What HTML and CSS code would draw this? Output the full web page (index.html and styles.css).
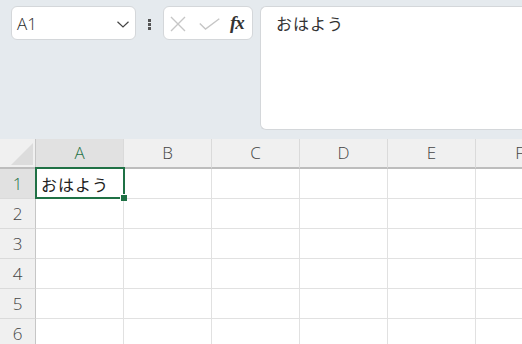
FILE: index.html
```html
<!DOCTYPE html>
<html lang="ja">
<head>
    <meta charset="UTF-8">
    <meta name="viewport" content="width=device-width, initial-scale=1.0">
    <title>Sheet</title>
    <link rel="stylesheet" href="styles.css">
</head>
<body>
    <div class="toolbar">
        <div class="name-box">
            <span class="name-text">A1</span>
            <svg class="chevron" width="12" height="7" viewBox="0 0 12 7">
                <path d="M0.5 0.8 L6 6 L11.5 0.8" fill="none" stroke="#444" stroke-width="1.2"/>
            </svg>
        </div>
        <div class="more">
            <span class="dot"></span>
            <span class="dot"></span>
            <span class="dot"></span>
        </div>
        <div class="fx-box">
            <svg class="icon-x" width="16" height="16" viewBox="0 0 16 16">
                <path d="M1 1 L15 15 M15 1 L1 15" stroke="#c6c6c6" stroke-width="1.4" fill="none"/>
            </svg>
            <svg class="icon-check" width="21" height="12" viewBox="0 0 21 12">
                <path d="M0.8 5.5 L6.5 11 L20.3 0.8" stroke="#c6c6c6" stroke-width="1.4" fill="none"/>
            </svg>
            <span class="fx">fx</span>
        </div>
        <div class="formula-bar">おはよう</div>
    </div>

    <div class="sheet">
        <div class="corner"></div>
        <div class="col-head active">A</div>
        <div class="col-head">B</div>
        <div class="col-head">C</div>
        <div class="col-head">D</div>
        <div class="col-head">E</div>
        <div class="col-head">F</div>

        <div class="row-head active">1</div>
        <div class="cell selected">おはよう</div>
        <div class="cell"></div><div class="cell"></div><div class="cell"></div><div class="cell"></div><div class="cell"></div>

        <div class="row-head">2</div>
        <div class="cell"></div><div class="cell"></div><div class="cell"></div><div class="cell"></div><div class="cell"></div><div class="cell"></div>

        <div class="row-head">3</div>
        <div class="cell"></div><div class="cell"></div><div class="cell"></div><div class="cell"></div><div class="cell"></div><div class="cell"></div>

        <div class="row-head">4</div>
        <div class="cell"></div><div class="cell"></div><div class="cell"></div><div class="cell"></div><div class="cell"></div><div class="cell"></div>

        <div class="row-head">5</div>
        <div class="cell"></div><div class="cell"></div><div class="cell"></div><div class="cell"></div><div class="cell"></div><div class="cell"></div>

        <div class="row-head">6</div>
        <div class="cell"></div><div class="cell"></div><div class="cell"></div><div class="cell"></div><div class="cell"></div><div class="cell"></div>
    </div>
</body>
</html>
```

FILE: styles.css
```css
body {
    margin: 0;
    width: 522px;
    height: 344px;
    overflow: hidden;
    background: #ffffff;
    font-family: 'Open Sans', 'Noto Sans CJK JP', sans-serif;
    color: #333;
}

/* top bar: name box, buttons, formula bar */
.toolbar {
    height: 139px;
    box-sizing: border-box;
    padding: 6px 0 0 11px;
    background: #e5eaee;
    display: flex;
    align-items: flex-start;
}

.name-box, .fx-box, .formula-bar {
    background: #fff;
    border: 1px solid #d4d7da;
    border-radius: 6px;
    box-sizing: border-box;
}

.name-box {
    flex-shrink: 0;
    width: 125px;
    height: 34px;
    display: flex;
    align-items: center;
    justify-content: space-between;
    padding: 0 6px 0 5px;
}

.name-text {
    font-size: 17px;
    font-weight: 300;
    color: #2b2b2b;
}

.chevron {
    margin-top: 2px;
}

.more {
    flex-shrink: 0;
    width: 27px;
    height: 34px;
    display: flex;
    flex-direction: column;
    align-items: center;
    justify-content: center;
    gap: 1px;
    padding-top: 2px;
    box-sizing: border-box;
}

.dot {
    width: 3px;
    height: 3px;
    background: #555;
}

.fx-box {
    flex-shrink: 0;
    width: 90px;
    height: 34px;
    display: flex;
    align-items: center;
    padding-left: 6px;
}

.icon-x {
    margin-top: 2px;
}

.icon-check {
    margin-left: 13px;
    margin-top: 1px;
}

.fx {
    margin-left: 10px;
    font-family: 'Liberation Serif', serif;
    font-style: italic;
    font-weight: bold;
    font-size: 19px;
    color: #333;
    letter-spacing: -1px;
}

.formula-bar {
    margin-left: 7px;
    flex: 1;
    min-width: 0;
    height: 124px;
    border-right: none;
    border-radius: 6px 0 0 6px;
    padding: 4px 0 0 15px;
    font-family: 'Noto Sans CJK JP', sans-serif;
    font-size: 16px;
    line-height: 24px;
    letter-spacing: 1px;
    color: #333;
}

/* grid */
.sheet {
    display: grid;
    grid-template-columns: 36px repeat(6, 88px);
    grid-template-rows: 30px repeat(6, 30px);
    font-size: 17px;
}

.corner, .col-head, .row-head {
    background: #f0f0f0;
    color: #444;
    box-sizing: border-box;
    display: flex;
    align-items: center;
    justify-content: center;
    font-weight: 300;
}

.corner {
    position: relative;
    border-bottom: 2px solid #bdbdbd;
    border-right: 1px solid #c6c6c6;
}

.corner::after {
    content: "";
    position: absolute;
    right: 2px;
    bottom: 2px;
    width: 22px;
    height: 22px;
    background: #dcdcdc;
    clip-path: polygon(100% 0, 100% 100%, 0 100%);
}

.col-head {
    border-bottom: 2px solid #bdbdbd;
    border-right: 1px solid #dadada;
    padding-bottom: 1px;
}

.row-head {
    border-right: 1px solid #c6c6c6;
    border-bottom: 1px solid #dadada;
}

.col-head.active, .row-head.active {
    background: #e1e1e1;
    color: #1f7145;
}

.cell {
    box-sizing: border-box;
    border-right: 1px solid #e1e1e1;
    border-bottom: 1px solid #e1e1e1;
    font-family: 'Noto Sans CJK JP', sans-serif;
    font-size: 16px;
    letter-spacing: 1px;
    display: flex;
    align-items: center;
    padding-left: 5px;
    color: #222;
}

.cell.selected {
    position: relative;
}

.cell.selected::after {
    content: "";
    position: absolute;
    left: -1px;
    top: -2px;
    right: -2px;
    bottom: -1px;
    border: 2px solid #1f7145;
}

.cell.selected::before {
    content: "";
    position: absolute;
    right: -4px;
    bottom: -3px;
    width: 6px;
    height: 6px;
    background: #1f7145;
    border-left: 1px solid #fff;
    border-top: 1px solid #fff;
    z-index: 1;
}
```
